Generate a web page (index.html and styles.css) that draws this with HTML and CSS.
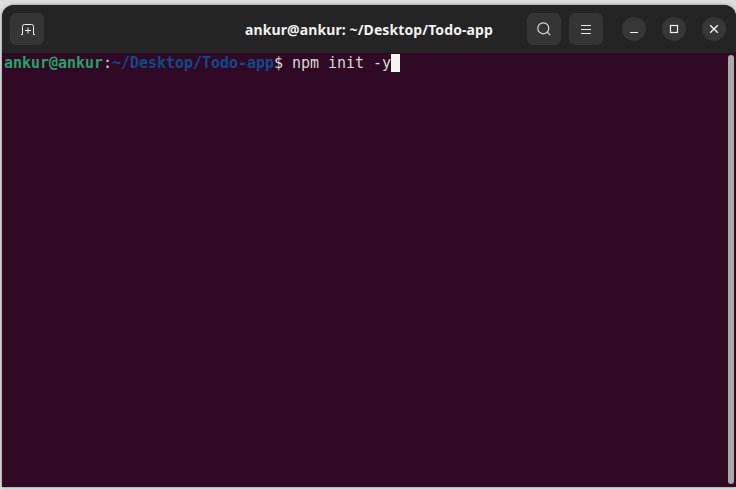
FILE: index.html
```html
<!DOCTYPE html>
<html lang="en">
<head>
<meta charset="utf-8">
<title>Terminal</title>
<link rel="stylesheet" href="styles.css">
</head>
<body>
<div class="window">
  <header class="titlebar">
    <div class="side">
      <button class="btn" aria-label="New tab">
        <svg width="16" height="16" viewBox="0 0 16 16" fill="none" stroke="#f0f0f0" stroke-width="1"><path d="M2 13.5h1.5v-8a2 2 0 0 1 2-2h7a2 2 0 0 1 2 2v8H16"/><path d="M9 6.5v6M6 9.5h6"/></svg>
      </button>
    </div>
    <div class="title">ankur@ankur: ~/Desktop/Todo-app</div>
    <div class="side right">
      <button class="btn" aria-label="Search">
        <svg width="16" height="16" viewBox="0 0 16 16" fill="none" stroke="#dedede" stroke-width="1.2"><circle cx="7.3" cy="7.3" r="5.5"/><path d="M11.2 11.2l3 3"/></svg>
      </button>
      <button class="btn" aria-label="Menu">
        <svg width="16" height="16" viewBox="0 0 16 16" fill="none" stroke="#e8e8e8" stroke-width="1"><path d="M3 4.5h10M3 8.5h10M3 12.5h10"/></svg>
      </button>
      <div class="winbtns">
        <div class="wb"><svg width="10" height="10" viewBox="0 0 10 10" fill="none" stroke="#f0f0f0" stroke-width="1"><path d="M1 8.5h8"/></svg></div>
        <div class="wb"><svg width="10" height="10" viewBox="0 0 10 10" fill="none" stroke="#f0f0f0" stroke-width="1.2"><rect x="1.5" y="1.5" width="7" height="7"/></svg></div>
        <div class="wb"><svg width="10" height="10" viewBox="0 0 10 10" fill="none" stroke="#f0f0f0" stroke-width="1.4"><path d="M1.2 1.2l7.6 7.6M8.8 1.2l-7.6 7.6"/></svg></div>
      </div>
    </div>
  </header>
  <main class="term">
    <div class="line"><span class="user">ankur@ankur</span><span class="plain">:</span><span class="path">~/Desktop/Todo-app</span><span class="plain">$ npm init -y</span><span class="cursor"></span></div>
    <div class="scrollbar"></div>
  </main>
</div>
</body>
</html>
```
FILE: styles.css
```css
html, body { margin: 0; padding: 0; height: 100%; }
body { background: #dcdcdc; overflow: hidden; }
.window {
  margin: 5px 0 0 2px;
  height: 482px;
  display: flex;
  flex-direction: column;
  border-radius: 12px 12px 0 0;
  overflow: hidden;
  background: #242424;
  box-shadow: 0 0 3px rgba(0, 0, 0, .45);
}
.titlebar {
  height: 48px;
  flex: none;
  display: flex;
  align-items: center;
  justify-content: space-between;
  padding: 0 10px 0 8px;
  box-sizing: border-box;
  background: #242424;
  position: relative;
}
.side { display: flex; align-items: center; gap: 8px; }
.title {
  position: absolute;
  left: 0;
  right: 0;
  text-align: center;
  color: #f2f2f2;
  font: bold 14px "Noto Sans", "Open Sans", sans-serif;
  letter-spacing: .1px;
  pointer-events: none;
}
.btn {
  width: 34px;
  height: 32px;
  padding: 0;
  border: 0;
  border-radius: 6px;
  background: #353535;
  display: flex;
  align-items: center;
  justify-content: center;
}
.winbtns { display: flex; gap: 16px; margin-left: 11px; }
.wb {
  width: 24px;
  height: 24px;
  border-radius: 50%;
  background: #373737;
  display: flex;
  align-items: center;
  justify-content: center;
}
.term {
  flex: 1;
  background: #300a24;
  position: relative;
  padding: 1px 2px;
  font: 15px/18px "DejaVu Sans Mono", monospace;
  letter-spacing: -.03px;
  color: #d8d8d8;
}
.line { display: flex; white-space: pre; height: 18px; }
.user { color: #26a269; font-weight: bold; }
.path { color: #12488b; font-weight: bold; }
.plain { color: #d8d8d8; }
.cursor { width: 9px; height: 18px; background: #f4f4f4; }
.scrollbar {
  position: absolute;
  top: 2px;
  right: 2px;
  bottom: 3px;
  width: 6px;
  border-radius: 3px;
  background: #a9a9a9;
}
```
